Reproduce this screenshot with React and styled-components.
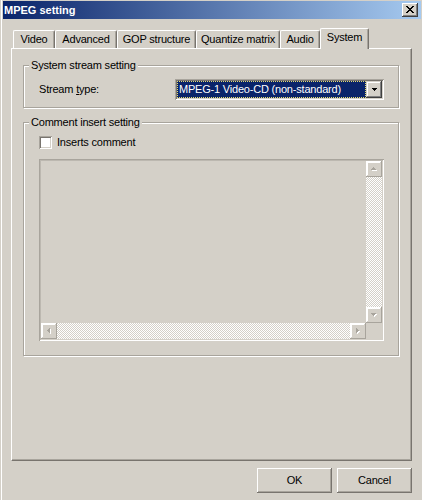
import React from "react";
import styled, { createGlobalStyle } from "styled-components";

const FACE = "#d4d0c8";
const SHADOW = "#a8a49c";
const DARK = "#78746e";
const HI = "#ffffff";

const Global = createGlobalStyle`
  html, body { margin: 0; padding: 0; background: ${FACE}; }
  body {
    font-family: "Liberation Sans", Arial, sans-serif;
    font-size: 11px;
    color: #000;
  }
  * { box-sizing: border-box; }
`;

const Window = styled.div`
  width: 422px;
  height: 500px;
  background: ${FACE};
  box-shadow: inset 1px 0 0 ${FACE}, inset 2px 0 0 ${HI};
  display: flex;
  flex-direction: column;
  overflow: hidden;
  letter-spacing: -0.2px;
`;

const TitleBar = styled.div`
  height: 18px;
  margin: 1px 1px 0 3px;
  padding: 0 3px 0 1px;
  background: linear-gradient(to right, #0a246a, #a6caf0);
  display: flex;
  align-items: center;
  justify-content: space-between;
`;

const Title = styled.span`
  color: #fff;
  font-weight: bold;
  font-size: 11px;
  letter-spacing: 0;
  line-height: 13px;
`;

const CloseButton = styled.div`
  width: 16px;
  height: 14px;
  background: ${FACE};
  box-shadow: inset -1px -1px 0 #404040, inset 1px 1px 0 ${HI},
    inset -2px -2px 0 #808080;
  display: flex;
  align-items: center;
  justify-content: center;
  padding-bottom: 1px;
`;

const Body = styled.div`
  flex: 1;
  display: flex;
  flex-direction: column;
  padding: 0 10px 0 11px;
`;

const TabStrip = styled.div`
  margin-top: 9px;
  height: 20px;
  padding-left: 2px;
  display: flex;
  align-items: flex-end;
  position: relative;
  z-index: 1;
`;

const Tab = styled.div`
  width: ${(p) => p.$w}px;
  height: ${(p) => (p.$active ? 21 : 18)}px;
  margin-bottom: ${(p) => (p.$active ? -1 : 0)}px;
  background: ${FACE};
  border-top: 1px solid ${HI};
  border-left: 1px solid ${HI};
  border-right: 1px solid ${DARK};
  box-shadow: inset -1px 0 0 ${SHADOW};
  border-top-left-radius: 2px;
  border-top-right-radius: 2px;
  display: flex;
  align-items: center;
  justify-content: center;
  padding-bottom: ${(p) => (p.$active ? 3 : 0)}px;
  line-height: 13px;
  white-space: nowrap;
`;

const Panel = styled.div`
  height: 413px;
  border-top: 1px solid ${HI};
  border-left: 1px solid ${HI};
  border-right: 1px solid ${DARK};
  border-bottom: 1px solid ${DARK};
  box-shadow: inset -1px -1px 0 ${SHADOW};
  padding: 10px 12px 0 11px;
  display: flex;
  flex-direction: column;
`;

const Group = styled.fieldset`
  margin: ${(p) => p.$top || 0}px 0 0 0;
  padding: 0;
  min-width: 0;
  border: 1px solid ${SHADOW};
  box-shadow: inset 1px 1px 0 ${HI}, 1px 1px 0 ${HI};
`;

const Legend = styled.legend`
  padding: 0 2px;
  margin-left: 5px;
  line-height: 13px;
  font-size: 11px;
  background: ${FACE};
`;

const GroupBody = styled.div`
  padding: ${(p) => p.$pad};
  display: flex;
  flex-direction: column;
  gap: ${(p) => p.$gap || 0}px;
`;

const Row = styled.div`
  display: flex;
  align-items: center;
  justify-content: space-between;
`;

const FieldLabel = styled.span`
  line-height: 13px;
  u { text-decoration: underline; text-underline-offset: 1px; }
`;

const Combo = styled.div`
  width: 209px;
  height: 21px;
  padding: 2px;
  background: #fff;
  display: flex;
  box-shadow: inset 1px 1px 0 ${SHADOW}, inset -1px -1px 0 ${HI},
    inset 2px 2px 0 ${DARK}, inset -2px -2px 0 ${FACE};
`;

const ComboValue = styled.div`
  flex: 1;
  background: #0a246a;
  color: #fff;
  outline: 1px dotted #e6dc6e;
  outline-offset: -1px;
  line-height: 17px;
  padding-left: 2px;
  white-space: nowrap;
  overflow: hidden;
`;

const ArrowButton = styled.div`
  width: 16px;
  height: ${(p) => p.$h || 16}px;
  flex: none;
  background: ${FACE};
  box-shadow: inset -1px -1px 0 ${(p) => (p.$soft ? SHADOW : "#404040")},
    inset 1px 1px 0 ${(p) => (p.$soft ? HI : FACE)},
    inset -2px -2px 0 ${(p) => (p.$soft ? FACE : "#808080")},
    inset 2px 2px 0 ${HI};
  display: flex;
  align-items: center;
  justify-content: center;
`;

const CheckRow = styled.label`
  display: flex;
  align-items: center;
  gap: 5px;
  height: 13px;
  line-height: 13px;
`;

const CheckBox = styled.span`
  width: 13px;
  height: 13px;
  background: #fff;
  box-shadow: inset 1px 1px 0 ${SHADOW}, inset -1px -1px 0 ${HI},
    inset 2px 2px 0 ${DARK}, inset -2px -2px 0 ${FACE};
`;

const EditBox = styled.div`
  width: 345px;
  height: 182px;
  padding: 2px;
  background: ${FACE};
  display: grid;
  grid-template-columns: 1fr 16px;
  grid-template-rows: 1fr 16px;
  box-shadow: inset 1px 1px 0 ${SHADOW}, inset -1px -1px 0 ${HI},
    inset 2px 2px 0 #bcb8b0, inset -2px -2px 0 ${FACE};
`;

const EditArea = styled.div`
  background: ${FACE};
`;

const ScrollBar = styled.div`
  display: flex;
  flex-direction: ${(p) => (p.$vertical ? "column" : "row")};
`;

const Track = styled.div`
  flex: 1;
  background-color: ${FACE};
  background-image: conic-gradient(
    ${HI} 25%,
    ${FACE} 0 50%,
    ${HI} 0 75%,
    ${FACE} 0
  );
  background-size: 2px 2px;
`;

const Corner = styled.div`
  background: ${FACE};
`;

const ButtonRow = styled.div`
  margin-top: 7px;
  display: flex;
  justify-content: flex-end;
  gap: 5px;
`;

const PushButton = styled.button`
  width: 75px;
  height: 25px;
  padding: 0 0 1px 0;
  border: none;
  font: inherit;
  font-size: 11px;
  letter-spacing: -0.2px;
  color: #000;
  background: ${FACE};
  box-shadow: inset -1px -1px 0 ${DARK}, inset 1px 1px 0 ${HI},
    inset -2px -2px 0 ${SHADOW};
`;

function Tri({ dir, color, dx = 0, dy = 0 }) {
  const rects = [];
  for (let i = 0; i < 3; i++) {
    let r;
    if (dir === "up") r = { x: 2 - i, y: i, width: 2 * i + 1, height: 1 };
    else if (dir === "down") r = { x: 2 - i, y: 2 - i, width: 2 * i + 1, height: 1 };
    else if (dir === "left") r = { x: i, y: 2 - i, width: 1, height: 2 * i + 1 };
    else r = { x: 2 - i, y: 2 - i, width: 1, height: 2 * i + 1 };
    rects.push(
      <rect key={i} x={r.x + dx} y={r.y + dy} width={r.width} height={r.height} fill={color} />
    );
  }
  return rects;
}

function Arrow({ dir, disabled }) {
  const vertical = dir === "up" || dir === "down";
  const w = vertical ? 6 : 4;
  const h = vertical ? 4 : 6;
  return (
    <svg width={w} height={h} viewBox={`0 0 ${w} ${h}`} shapeRendering="crispEdges">
      {disabled && <Tri dir={dir} color={HI} dx={1} dy={1} />}
      <Tri dir={dir} color={disabled ? "#a8a49c" : "#000"} />
    </svg>
  );
}

function SmallDown() {
  return (
    <svg width="5" height="3" viewBox="0 0 5 3" shapeRendering="crispEdges">
      <rect x="0" y="0" width="5" height="1" fill="#000" />
      <rect x="1" y="1" width="3" height="1" fill="#000" />
      <rect x="2" y="2" width="1" height="1" fill="#000" />
    </svg>
  );
}

function CloseGlyph() {
  const rows = [
    [0, 1, 6, 7],
    [1, 2, 5, 6],
    [2, 3, 4, 5],
    [3, 4],
    [2, 3, 4, 5],
    [1, 2, 5, 6],
    [0, 1, 6, 7],
  ];
  return (
    <svg width="8" height="7" viewBox="0 0 8 7" shapeRendering="crispEdges">
      {rows.flatMap((cols, y) =>
        cols.map((x) => <rect key={`${x}-${y}`} x={x} y={y} width="1" height="1" fill="#000" />)
      )}
    </svg>
  );
}

const tabs = [
  { label: "Video", w: 42 },
  { label: "Advanced", w: 62 },
  { label: "GOP structure", w: 79 },
  { label: "Quantize matrix", w: 84 },
  { label: "Audio", w: 40 },
  { label: "System", w: 49, active: true },
];

export default function App() {
  return (
    <>
      <Global />
      <Window>
        <TitleBar>
          <Title>MPEG setting</Title>
          <CloseButton>
            <CloseGlyph />
          </CloseButton>
        </TitleBar>
        <Body>
          <TabStrip>
            {tabs.map((t) => (
              <Tab key={t.label} $w={t.w} $active={t.active}>
                {t.label}
              </Tab>
            ))}
          </TabStrip>
          <Panel>
            <Group>
              <Legend>System stream setting</Legend>
              <GroupBody $pad="7px 14px 7px 15px">
                <Row>
                  <FieldLabel>
                    Stream <u>t</u>ype:
                  </FieldLabel>
                  <Combo>
                    <ComboValue>MPEG-1 Video-CD (non-standard)</ComboValue>
                    <ArrowButton $h={17}>
                      <SmallDown />
                    </ArrowButton>
                  </Combo>
                </Row>
              </GroupBody>
            </Group>
            <Group $top={8}>
              <Legend>Comment insert setting</Legend>
              <GroupBody $pad="7px 14px 14px 15px" $gap={10}>
                <CheckRow>
                  <CheckBox />
                  <span>Inserts comment</span>
                </CheckRow>
                <EditBox>
                  <EditArea />
                  <ScrollBar $vertical>
                    <ArrowButton $soft>
                      <Arrow dir="up" disabled />
                    </ArrowButton>
                    <Track />
                    <ArrowButton $soft>
                      <Arrow dir="down" disabled />
                    </ArrowButton>
                  </ScrollBar>
                  <ScrollBar>
                    <ArrowButton $soft>
                      <Arrow dir="left" disabled />
                    </ArrowButton>
                    <Track />
                    <ArrowButton $soft>
                      <Arrow dir="right" disabled />
                    </ArrowButton>
                  </ScrollBar>
                  <Corner />
                </EditBox>
              </GroupBody>
            </Group>
          </Panel>
          <ButtonRow>
            <PushButton>OK</PushButton>
            <PushButton>Cancel</PushButton>
          </ButtonRow>
        </Body>
      </Window>
    </>
  );
}
